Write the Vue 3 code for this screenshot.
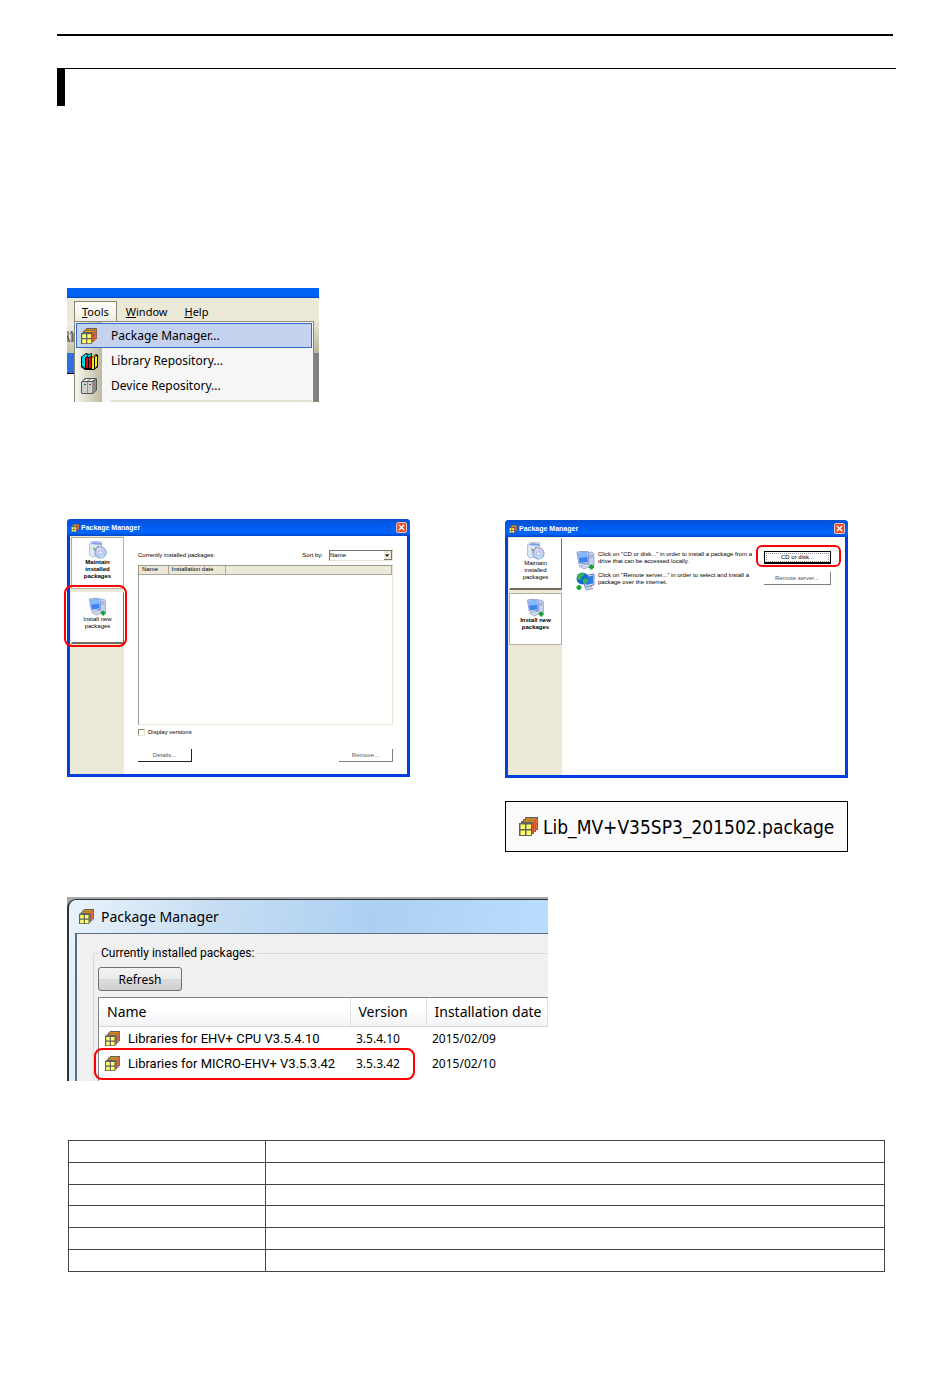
<template>
  <div class="page">
    <svg class="symbols" aria-hidden="true">
      <symbol id="icon-package" viewBox="0 0 19 19">
        <path d="M6 0h13v13h-2v2h-2v2h-2v2H0V6h2V4h2V2h2z" fill="#606060" />
        <path d="M6.500 1.500h11v1.200h-11zM4.500 3.600h11v1.200h-11z" fill="#ff9a00" />
        <path d="M16.800 2h1.500v4.500h-1.500zM16.800 7.200h1.500v5h-1.500zM14.800 4.200h1.500v4.500h-1.500zM14.800 9.400h1.500v5h-1.500z" fill="#ff6a2a" />
        <path d="M13 6.500h1.200v4H13zM13 11.500h1.200v5H13z" fill="#e8592b" />
        <path d="M1.500 7.500h4.500v4.500H1.500zM7.500 7.500H12v4.500H7.500zM1.500 13.500h4.500V18H1.500zM7.500 13.500H12V18H7.500z" fill="#ffff66" />
      </symbol>
      <symbol id="icon-books" viewBox="0 0 18 18">
        <path d="M1 5l5-4 3 1 3-1v4l4-3 2 1v12l-4 3H5L1 15z" fill="#000" />
        <path d="M2 5l4-3 2 1-3 3v10l-3-2z" fill="#00d5dc" />
        <path d="M6 6l2-1v11H6zM9 5l2-1v12H9z" fill="#e30613" />
        <path d="M8 3l3-1v2L8 5z" fill="#00d5dc" />
        <path d="M12 6l2-1v12h-2zM15 5l2-1v10l-2 2z" fill="#f7f000" />
        <path d="M12 5l4-2v1l-3 2z" fill="#b8a800" />
      </symbol>
      <symbol id="icon-device" viewBox="0 0 18 18">
        <path d="M1 5l4-4h11l1 1v11l-4 4H2l-1-1z" fill="#555" />
        <path d="M2 5h5v11H2zM7.500 5h5v11h-5z" fill="#cfcfcf" />
        <path d="M3 4l3-2h4L7 4zM8 4l3-2h4l-3 2z" fill="#ececec" />
        <path d="M13 5l3-3v11l-3 3z" fill="#8c8c8c" />
        <path d="M4 7h2v1H4z" fill="#187b2c" />
        <path d="M9 7h2v1H9z" fill="#c01818" />
      </symbol>
      <symbol id="icon-maintain" viewBox="0 0 18 18">
        <path d="M1 3l3-3 9 1v13l-9 2-3-2z" fill="#dfe6f6" stroke="#8d9cc4" stroke-width=".6" />
        <path d="M2 3l3-2 8 1v2z" fill="#7f9fe6" />
        <path d="M5 7l2 2 3-4" fill="none" stroke="#3fa345" stroke-width="1.200" />
        <circle cx="12" cy="11.500" r="5.600" fill="#c3d0f5" stroke="#6f80c0" stroke-width=".8" />
        <path d="M12 11.500L8 7.600A5.500 5.500 0 0 1 12 6z" fill="#f3c9ef" />
        <path d="M12 11.500l4 4a5.500 5.500 0 0 1-4 1.500z" fill="#a6e6f2" />
        <circle cx="12" cy="11.500" r="1.600" fill="#fff" stroke="#8d9cc4" stroke-width=".5" />
      </symbol>
      <symbol id="icon-install" viewBox="0 0 19 19">
        <path d="M11 2l5-1 2 2v12l-5 1-2-1z" fill="#c8d2ee" stroke="#7a89b8" stroke-width=".6" />
        <path d="M13 5l4-1M13 7l4-1" stroke="#7a89b8" stroke-width=".7" />
        <path d="M1 1l11-1 1 12-10 1z" fill="#dbe4f8" stroke="#5f79c0" stroke-width=".7" />
        <path d="M2 2l9-1 1 10-8.500 1z" fill="#3f84ee" />
        <path d="M2 2l9-1 .4 5L2.600 7z" fill="#84b8ff" />
        <path d="M3 15l8-2 4 2-7 3z" fill="#d3daf0" stroke="#7a89b8" stroke-width=".6" />
        <path d="M15.500 13.500v5M13 16h5" stroke="#16a32b" stroke-width="2.400" />
      </symbol>
      <symbol id="icon-remote" viewBox="0 0 19 19">
        <path d="M7 4l11-2v11l-9 2z" fill="#dbe4f8" stroke="#4562ad" stroke-width=".8" />
        <path d="M9 5l8-1.500v8L10 13z" fill="#2f7be8" />
        <path d="M9 15l6-1 2 3-7 1z" fill="#c3cde8" stroke="#7a89b8" stroke-width=".6" />
        <circle cx="6.500" cy="6.500" r="6" fill="#1769d2" />
        <path d="M2 3c3-3 6-2 7-1-1 2-4 2-4 4s-2 2-4 1c0-2 0-3 1-4zM8 7c2-1 4 0 4 1-1 3-3 4-4 4-1-1-2-4 0-5z" fill="#35b556" />
        <path d="M3 13v5M.5 15.500h5" stroke="#16a32b" stroke-width="2.400" />
      </symbol>
    </svg>

    <header class="page-head">
      <div class="head-rule"></div>
      <div class="section-bar"></div>
    </header>

    <main class="content">
      <div class="menu-shot">
        <div class="menu-titlebar"></div>
        <nav class="menu-bar">
          <button
            v-for="menu in menus"
            :key="menu"
            type="button"
            class="menu-tab"
            :class="{ open: menu === 'Tools' }"
          >
            <u>{{ menu[0] }}</u>{{ menu.slice(1) }}
          </button>
        </nav>
        <div class="menu-body">
          <div class="menu-left">
            <svg class="menu-left-tool" viewBox="0 0 7 32">
              <path d="M1 10v11M3 13l2-3v11M6 12v9M0 15l3 6" fill="none" stroke="#444" stroke-width="1" />
            </svg>
            <div class="menu-left-tab"></div>
          </div>
          <div class="menu-panel">
            <button
              v-for="(item, index) in toolItems"
              :key="item.label"
              type="button"
              class="menu-item"
              :class="{ selected: index === 0 }"
            >
              <svg class="menu-icon"><use :href="item.icon" /></svg>
              <span>{{ item.label }}</span>
            </button>
            <div class="menu-separator"></div>
          </div>
          <div class="menu-right"></div>
        </div>
      </div>

      <div class="windows">
        <section class="xp-window">
          <div class="xp-title">
            <svg class="xp-title-icon"><use href="#icon-package" /></svg>
            <span>Package Manager</span>
            <button type="button" class="xp-close" aria-label="Close">
              <svg viewBox="0 0 10 10"><path d="M2 2l6 6M8 2l-6 6" stroke="#fff" stroke-width="1.500" /></svg>
            </button>
          </div>
          <div class="xp-body">
            <div class="xp-side">
              <button type="button" class="side-btn active">
                <svg><use href="#icon-maintain" /></svg>
                <span>Maintain<br />installed<br />packages</span>
              </button>
              <button type="button" class="side-btn raised">
                <svg><use href="#icon-install" /></svg>
                <span>Install new<br />packages</span>
              </button>
              <div class="mark mark-install"></div>
            </div>
            <div class="xp-main">
              <div class="xp-toolbar">
                <span>Currently installed packages:</span>
                <label class="sort-label" for="sort-by">Sort by:</label>
                <div class="sort-box">
                  <select id="sort-by" v-model="sortBy">
                    <option>Name</option>
                  </select>
                  <svg class="sort-arrow" viewBox="0 0 8 9"><path d="M1 4h5L3.500 6.500z" fill="#000" /></svg>
                </div>
              </div>
              <div class="xp-list">
                <table>
                  <thead>
                    <tr>
                      <th class="col-name">Name</th>
                      <th class="col-date">Installation date</th>
                      <th></th>
                    </tr>
                  </thead>
                </table>
              </div>
              <label class="xp-check">
                <input v-model="displayVersions" type="checkbox" />
                Display versions
              </label>
              <div class="xp-actions">
                <button type="button" class="xp-btn dark">Details...</button>
                <button type="button" class="xp-btn">Remove...</button>
              </div>
            </div>
          </div>
        </section>

        <div class="right-column">
          <section class="xp-window">
            <div class="xp-title">
              <svg class="xp-title-icon"><use href="#icon-package" /></svg>
              <span>Package Manager</span>
              <button type="button" class="xp-close" aria-label="Close">
                <svg viewBox="0 0 10 10"><path d="M2 2l6 6M8 2l-6 6" stroke="#fff" stroke-width="1.500" /></svg>
              </button>
            </div>
            <div class="xp-body">
              <div class="xp-side">
                <button type="button" class="side-btn raised">
                  <svg><use href="#icon-maintain" /></svg>
                  <span>Maintain<br />installed<br />packages</span>
                </button>
                <button type="button" class="side-btn active">
                  <svg><use href="#icon-install" /></svg>
                  <span>Install new<br />packages</span>
                </button>
              </div>
              <div class="xp-main">
                <div v-for="source in sources" :key="source.button" class="source">
                  <svg><use :href="source.icon" /></svg>
                  <p>{{ source.lines[0] }}<br />{{ source.lines[1] }}</p>
                  <div class="source-action">
                    <button type="button" class="xp-btn wide" :class="{ focused: source.marked }">
                      <span>{{ source.button }}</span>
                    </button>
                    <div v-if="source.marked" class="mark mark-disk"></div>
                  </div>
                </div>
              </div>
            </div>
          </section>

          <div class="package-file">
            <svg><use href="#icon-package" /></svg>
            <span>Lib_MV+V35SP3_201502.package</span>
          </div>
        </div>
      </div>

      <section class="vista">
        <div class="vista-frame">
          <div class="vista-title">
            <svg><use href="#icon-package" /></svg>
            <span>Package Manager</span>
          </div>
          <div class="vista-client">
            <fieldset>
              <legend>Currently installed packages:</legend>
              <button type="button" class="refresh">Refresh</button>
              <div class="vista-list">
                <table>
                  <thead>
                    <tr>
                      <th class="col-lib">Name</th>
                      <th class="col-version">Version</th>
                      <th>Installation date</th>
                    </tr>
                  </thead>
                  <tbody>
                    <tr v-for="lib in libraries" :key="lib.name">
                      <td>
                        <div class="lib-name">
                          <svg><use href="#icon-package" /></svg>
                          {{ lib.name }}
                        </div>
                      </td>
                      <td>{{ lib.version }}</td>
                      <td>{{ lib.date }}</td>
                    </tr>
                  </tbody>
                </table>
                <div class="mark mark-library"></div>
              </div>
            </fieldset>
          </div>
        </div>
      </section>

      <table class="blank-table">
        <tbody>
          <tr v-for="row in 6" :key="row">
            <td class="blank-key"></td>
            <td></td>
          </tr>
        </tbody>
      </table>
    </main>
  </div>
</template>

<script setup>
import { ref } from 'vue'

const sortBy = ref('Name')
const displayVersions = ref(false)

const menus = ['Tools', 'Window', 'Help']

const toolItems = [
  { label: 'Package Manager...', icon: '#icon-package' },
  { label: 'Library Repository...', icon: '#icon-books' },
  { label: 'Device Repository...', icon: '#icon-device' },
]

const sources = [
  {
    icon: '#icon-install',
    lines: [
      'Click on "CD or disk..." in order to install a package from a',
      'drive that can be accessed locally.',
    ],
    button: 'CD or disk...',
    marked: true,
  },
  {
    icon: '#icon-remote',
    lines: [
      'Click on "Remote server..." in order to select and install a',
      'package over the internet.',
    ],
    button: 'Remote server...',
    marked: false,
  },
]

const libraries = [
  { name: 'Libraries for EHV+ CPU V3.5.4.10', version: '3.5.4.10', date: '2015/02/09' },
  { name: 'Libraries for MICRO-EHV+ V3.5.3.42', version: '3.5.3.42', date: '2015/02/10' },
]
</script>

<style>
body {
  background: #fff;
}
</style>

<style scoped>
.page {
  box-sizing: border-box;
  padding: 34px 54px 106px 57px;
  font-family: 'Noto Sans', 'Open Sans', sans-serif;
  font-size: 12px;
  color: #000;
}

.page *,
.page *::before {
  box-sizing: border-box;
}

.symbols {
  position: absolute;
  width: 0;
  height: 0;
}

button,
select,
input {
  margin: 0;
  padding: 0;
  border: none;
  border-radius: 0;
  background: transparent;
  font: inherit;
  color: inherit;
}

.head-rule {
  height: 2px;
  margin-right: 3px;
  background: #000;
}

.section-bar {
  height: 38px;
  margin-top: 32px;
  background: linear-gradient(#000, #000) left / 8px 100% no-repeat;
  border-top: 1px solid #000;
}

.content {
  padding: 182px 8px 0 10px;
}

.mark {
  position: absolute;
  border: 2px solid #f00;
  border-radius: 8px;
  pointer-events: none;
}

/* Tools menu */
.menu-shot {
  width: 252px;
}

.menu-titlebar {
  height: 10px;
  background: linear-gradient(#0062f5 80%, #0043c0);
}

.menu-bar {
  display: flex;
  align-items: flex-end;
  gap: 1px;
  height: 23px;
  padding-left: 7px;
  font-size: 11px;
  background: #ece9d8;
}

.menu-tab {
  height: 20px;
  padding: 0 8px;
  line-height: 21px;
}

.menu-tab.open {
  padding: 0 7px;
  line-height: 20px;
  background: linear-gradient(#fdfdfb, #f0eee4);
  border: 1px solid #8a8774;
  border-bottom: none;
}

.menu-body {
  display: flex;
  height: 81px;
}

.menu-left {
  width: 7px;
}

.menu-left-tool {
  display: block;
  width: 7px;
  height: 32px;
  background: linear-gradient(#f4f2e8, #c4c0a8);
}

.menu-left-tab {
  height: 21px;
  background: #2f6fe0;
  border-bottom: 1px solid #000;
}

.menu-panel {
  flex: 1;
  padding: 1px 1px 0;
  background: linear-gradient(90deg, #f8f7f0, #bdb9a1 27px, #f6f6f6 27px);
  border: 1px solid #8a8774;
  border-bottom: none;
}

.menu-item {
  display: flex;
  align-items: center;
  width: 100%;
  height: 25px;
  padding: 0 4px;
  border: 1px solid transparent;
}

.menu-item.selected {
  background: #c4d2ee;
  border-color: #316ac5;
}

.menu-icon {
  width: 18px;
  height: 18px;
  margin-right: 12px;
}

.menu-item.selected .menu-icon {
  width: 16px;
  height: 16px;
  margin-right: 14px;
}

.menu-item:not(.selected) .menu-icon {
  margin-left: -1px;
  margin-right: 13px;
}

.menu-separator {
  height: 2px;
  margin: 2px 0 0 35px;
  background: #e4e1d0;
}

.menu-right {
  width: 5px;
  background: linear-gradient(#e8e5d6, #b9b69f 32px, #808080 32px);
}

/* XP windows */
.windows {
  display: grid;
  grid-template-columns: 1fr 1fr;
  gap: 95px;
  align-items: start;
  margin-top: 117px;
  padding-right: 40px;
}

.right-column {
  padding-top: 1px;
}

.xp-window {
  display: flex;
  flex-direction: column;
  height: 258px;
  font-family: 'Liberation Sans', Arial, sans-serif;
  font-size: 6px;
  line-height: 7px;
  background: #fff;
  border: solid #0040dc;
  border-width: 0 3px 3px;
  border-radius: 4px 4px 0 0;
}

.xp-title {
  display: flex;
  align-items: center;
  height: 17px;
  margin: 0 -3px;
  padding: 0 3px 0 4px;
  font-size: 7px;
  font-weight: bold;
  color: #fff;
  background: linear-gradient(#0a50d0, #0058ea 30%, #0066ff 80%, #0046c8);
  border-radius: 4px 4px 0 0;
}

.xp-title-icon {
  width: 8px;
  height: 8px;
  margin-right: 2px;
}

.xp-close {
  width: 11px;
  height: 11px;
  margin-left: auto;
  background: #e0512c;
  border: 1px solid #f0c0b4;
  border-radius: 2px;
}

.xp-close svg {
  display: block;
  width: 9px;
  height: 9px;
}

.xp-body {
  display: flex;
  flex: 1;
}

.xp-side {
  position: relative;
  display: flex;
  flex-direction: column;
  gap: 3px;
  width: 54px;
  padding: 1px 0 0 1px;
  background: #ece9d8;
}

.side-btn {
  display: flex;
  flex-direction: column;
  align-items: center;
  height: 52px;
  padding-top: 3px;
  background: #fff;
  border: 1px solid #b5b19c;
}

.side-btn svg {
  width: 19px;
  height: 18px;
}

.side-btn.active {
  font-weight: bold;
}

.side-btn.raised {
  border-color: #fff #6f6d62 #6f6d62 #fff;
  border-bottom-width: 2px;
}

.side-btn:nth-child(2) {
  padding-top: 5px;
}

.mark-install {
  top: 49px;
  left: -6px;
  width: 63px;
  height: 62px;
}

.xp-main {
  flex: 1;
  padding: 14px 14px 0;
}

.xp-toolbar {
  display: flex;
  align-items: center;
  height: 11px;
}

.sort-label {
  margin-left: auto;
}

.sort-box {
  position: relative;
  width: 64px;
  height: 11px;
  margin-left: 6px;
}

.sort-box select {
  display: block;
  width: 100%;
  height: 100%;
  appearance: none;
  background: #fff;
  border: 1px solid;
  border-color: #77756a #e8e5d6 #e8e5d6 #77756a;
}

.sort-arrow {
  position: absolute;
  top: 1px;
  right: 1px;
  width: 8px;
  height: 9px;
  background: #ece9d8;
  border: solid #77756a;
  border-width: 0 1px 1px 0;
}

.xp-list {
  height: 160px;
  margin-top: 4px;
  border: 1px solid;
  border-color: #9b988c #ece9d8 #ece9d8 #9b988c;
}

.xp-list table {
  width: 100%;
  table-layout: fixed;
  border-collapse: collapse;
}

.xp-list th {
  height: 8px;
  padding: 0 3px;
  font-weight: normal;
  text-align: left;
  background: #ece9d8;
  border-right: 1px solid #aca899;
  border-bottom: 1px solid #aca899;
}

.xp-list .col-name {
  width: 29px;
}

.xp-list .col-date {
  width: 57px;
}

.xp-check {
  display: flex;
  align-items: center;
  gap: 3px;
  height: 7px;
  margin-top: 4px;
}

.xp-check input {
  width: 7px;
  height: 7px;
  appearance: none;
  border: 1px solid;
  border-color: #8e8b7e #e8e5d6 #e8e5d6 #8e8b7e;
}

.xp-actions {
  display: flex;
  justify-content: space-between;
  margin-top: 13px;
}

.xp-btn {
  width: 54px;
  height: 13px;
  color: #555;
  background: #fff;
  border: solid #808080;
  border-width: 0 1px 1px 0;
}

.xp-btn.dark {
  border-color: #222;
}

.xp-btn.wide {
  display: block;
  width: 67px;
}

.xp-btn.focused {
  color: #000;
  border: 1px solid #000;
  border-bottom-width: 2px;
}

.xp-btn.focused span {
  display: block;
  margin: 0 1px;
  border: 1px dotted #999;
}

.source {
  display: flex;
  gap: 3px;
  height: 21px;
}

.source svg {
  width: 19px;
  height: 19px;
}

.source p {
  flex: 1;
  margin: 0;
  white-space: nowrap;
}

.source-action {
  position: relative;
}

.mark-disk {
  top: -6px;
  left: -8px;
  width: 85px;
  height: 22px;
  border-radius: 6px;
}

.package-file {
  display: flex;
  align-items: center;
  gap: 5px;
  height: 51px;
  margin-top: 23px;
  padding-left: 13px;
  font-family: 'DejaVu Sans Condensed', 'Noto Sans', sans-serif;
  font-size: 19px;
  background: #fbfbfb;
  border: 1px solid #000;
}

.package-file svg {
  width: 19px;
  height: 19px;
}

/* Installed libraries window */
.vista {
  width: 481px;
  height: 184px;
  margin-top: 45px;
  padding-top: 2px;
  overflow: hidden;
  background: #a8a8a8;
}

.vista-frame {
  height: 182px;
  padding-left: 6px;
  background: linear-gradient(100deg, #e9f2fa, #c5ddf2 30%, #add0f2 60%, #bbdfff);
  border: solid #2c3440;
  border-width: 1px 0 0 2px;
  border-radius: 9px 0 0;
}

.vista-title {
  display: flex;
  align-items: center;
  gap: 7px;
  height: 33px;
  padding-left: 4px;
  font-size: 14px;
}

.vista-title svg {
  width: 15px;
  height: 15px;
}

.vista-client {
  height: 148px;
  padding: 11px 0 0 16px;
  background: #f0f0f0;
  border: solid #5b6d80;
  border-width: 1px 0 0 2px;
}

fieldset {
  min-width: 0;
  margin: 0;
  padding: 6px 0 0 4px;
  border: 1px solid #d0dce4;
  border-width: 1px 0 0 1px;
}

legend {
  padding: 0 3px;
  font-family: Roboto, 'Noto Sans', sans-serif;
  line-height: 16px;
}

.refresh {
  display: block;
  width: 84px;
  height: 24px;
  background: linear-gradient(#f3f3f3, #ebebeb 50%, #dcdcdc 50%, #cfcfcf);
  border: 1px solid #707070;
  border-radius: 3px;
}

.vista-list {
  position: relative;
  height: 84px;
  margin-top: 6px;
  background: #fff;
  border: solid #82858c;
  border-width: 1px 0 0 1px;
}

.vista-list table {
  width: 100%;
  table-layout: fixed;
  border-collapse: collapse;
}

.vista-list th {
  height: 28px;
  padding: 0 0 0 8px;
  font-size: 14px;
  font-weight: normal;
  text-align: left;
  white-space: nowrap;
  background: linear-gradient(#fff 40%, #f1f2f4);
  border-right: 1px solid #dfe0e2;
  border-bottom: 1px solid #d5d5d5;
}

.vista-list .col-lib {
  width: 251px;
}

.vista-list .col-version {
  width: 76px;
}

.vista-list td {
  height: 25px;
  padding: 0 0 0 6px;
  white-space: nowrap;
}

.lib-name {
  display: flex;
  align-items: center;
  gap: 8px;
  font-family: Roboto, 'Noto Sans', sans-serif;
  font-size: 13px;
}

.lib-name svg {
  width: 15px;
  height: 15px;
}

.mark-library {
  top: 50px;
  left: -5px;
  width: 321px;
  height: 32px;
}

.blank-table {
  width: calc(100% - 4px);
  height: 132px;
  margin-top: 59px;
  margin-left: 1px;
  border-collapse: collapse;
}

.blank-table td {
  padding: 0;
  border: 1px solid #444;
}

.blank-key {
  width: 197px;
}
</style>
